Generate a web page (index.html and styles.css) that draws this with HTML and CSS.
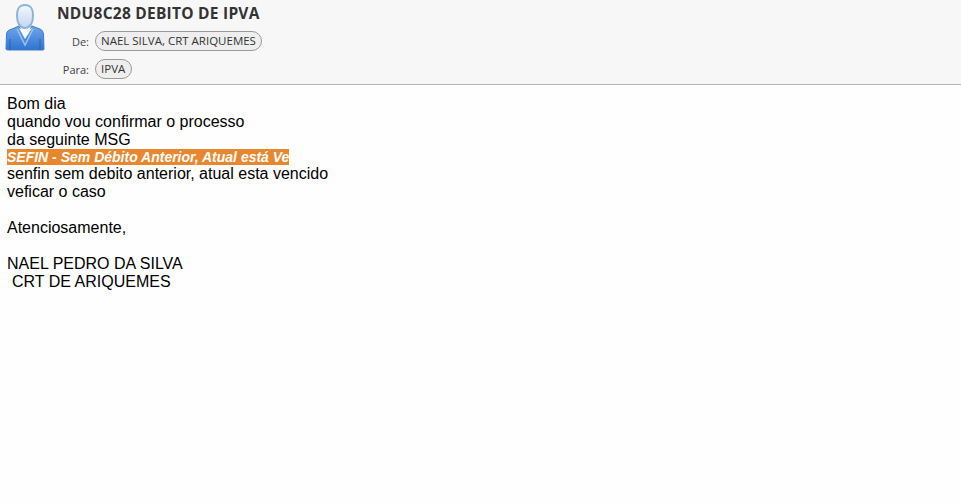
FILE: index.html
```html
<!DOCTYPE html>
<html lang="en">
<head>
    <meta charset="UTF-8">
    <meta name="viewport" content="width=device-width, initial-scale=1.0">
    <title>NDU8C28 DEBITO DE IPVA</title>
    <link rel="stylesheet" href="styles.css">
</head>
<body>
    <div class="header">
        <svg class="avatar" width="40" height="50" viewBox="0 0 40 50">
            <defs>
                <linearGradient id="head" x1="0" y1="0" x2="0" y2="1">
                    <stop offset="0" stop-color="#f4f8fd"/>
                    <stop offset="1" stop-color="#c3d6ee"/>
                </linearGradient>
                <linearGradient id="coat" x1="0" y1="0" x2="0" y2="1">
                    <stop offset="0" stop-color="#6fa6ea"/>
                    <stop offset="1" stop-color="#2f74d0"/>
                </linearGradient>
            </defs>
            <path d="M7 27 L14 24 L20 36 L27 24 L35 27 Q38 28 38.500 32 L39 47 Q39 48 38 48 L3 48 Q1 48 1 47 L1.500 32 Q2 28 7 27 Z" fill="url(#coat)" stroke="#3e7cc8"/>
            <path d="M14 26 L20 37 L27 26 L23 28 L18 28 Z" fill="#fff"/>
            <path d="M12 27 L20 43 L28 27" fill="none" stroke="#9cc2f0" stroke-width="1.500"/>
            <path d="M20 3 C13 3 12 8 12 14 C12 21 15 26 20 26 C25 26 28 21 28 14 C28 8 27 3 20 3 Z" fill="url(#head)" stroke="#8fb2dc" stroke-width="2"/>
            <path d="M5 37 L5 48 M35 37 L35 48" stroke="#2a62b0"/>
        </svg>
        <div class="info">
            <h1 class="subject">NDU8C28 DEBITO DE IPVA</h1>
            <div class="row">
                <span class="label">De:</span>
                <span class="chip">NAEL SILVA, CRT ARIQUEMES</span>
            </div>
            <div class="row">
                <span class="label">Para:</span>
                <span class="chip">IPVA</span>
            </div>
        </div>
    </div>
    <div class="message">
        <div>Bom dia</div>
        <div>quando vou confirmar o processo</div>
        <div>da seguinte MSG</div>
        <div class="quoted"><span class="highlight">SEFIN - Sem Débito Anterior, Atual está Ve</span></div>
        <div>senfin sem debito anterior, atual esta vencido</div>
        <div>veficar o caso</div>
        <br>
        <div>Atenciosamente,</div>
        <br>
        <div>NAEL PEDRO DA SILVA</div>
        <div class="crt">CRT DE ARIQUEMES</div>
    </div>
</body>
</html>
```

FILE: styles.css
```css
body {
    margin: 0;
    background: #fefefe;
    color: #000;
    font-family: "Liberation Sans", Arial, sans-serif;
}

/* Message header */
.header {
    display: flex;
    height: 84px;
    background-color: #f7f7f7;
    border-bottom: 1px solid #b4b4b4;
}

.avatar {
    flex: none;
    margin: 2px 0 0 5px;
}

.info {
    margin-left: 12px;
    font-family: "Open Sans", "Noto Sans", sans-serif;
}

.subject {
    margin: 3px 0 8px;
    font-size: 15.500px;
    line-height: 20px;
    font-weight: 700;
    letter-spacing: 0.25px;
    color: #333;
}

.row {
    display: flex;
    align-items: center;
    margin-bottom: 8px;
}

.label {
    width: 32px;
    margin-right: 6px;
    text-align: right;
    font-size: 11px;
    color: #444;
}

.chip {
    padding: 0 5.500px 0 5px;
    height: 18px;
    line-height: 17px;
    font-size: 11.500px;
    color: #333;
    background-color: #eee;
    border: 1px solid #999;
    border-radius: 10px;
}

/* Message body */
.message {
    padding: 10px 7px;
    font-size: 16px;
    line-height: 18px;
}

.quoted {
    line-height: 16px;
}

.highlight {
    background-color: #e8872e;
    color: #fff;
    font-size: 14px;
    font-weight: bold;
    font-style: italic;
}

.crt {
    padding-left: 5px;
}
```
